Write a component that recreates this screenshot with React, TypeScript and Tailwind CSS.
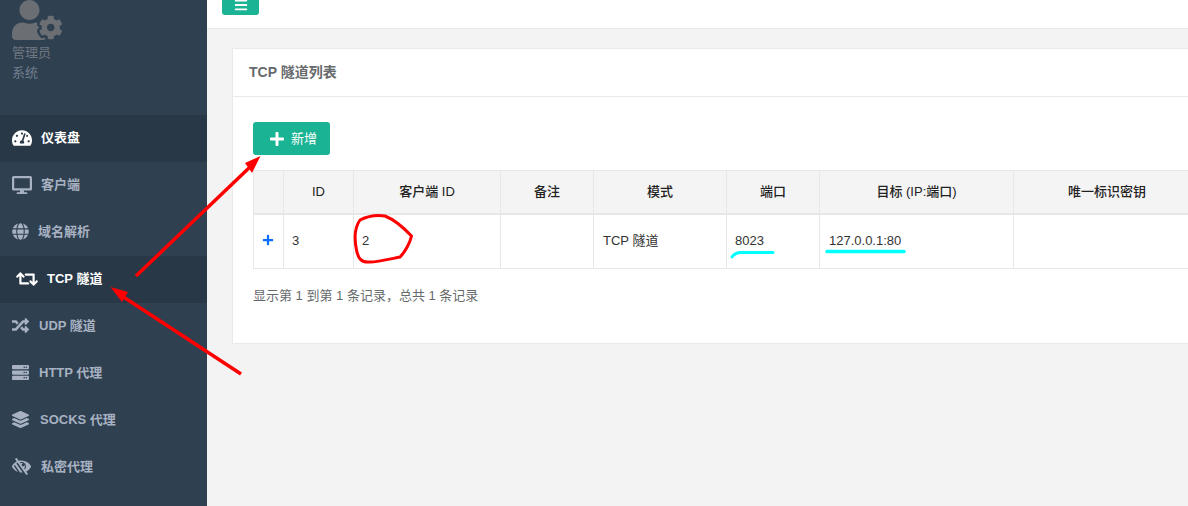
import React from 'react';
import { FaUserCog, FaTachometerAlt, FaDesktop, FaGlobe, FaRetweet, FaRandom, FaServer, FaLayerGroup, FaLowVision, FaPlus, FaBars } from 'react-icons/fa';

const menu = [
    { label: '仪表盘', icon: <FaTachometerAlt size={20} />, active: true, pad: 'pl-3', gap: 'gap-[9px]' },
    { label: '客户端', icon: <FaDesktop size={20} />, active: false, pad: 'pl-3', gap: 'gap-[9px]' },
    { label: '域名解析', icon: <FaGlobe size={17} />, active: false, pad: 'pl-3', gap: 'gap-[9px]' },
    { label: 'TCP 隧道', icon: <FaRetweet size={22} />, active: true, pad: 'pl-4', gap: 'gap-[9px]' },
    { label: 'UDP 隧道', icon: <FaRandom size={17} />, active: false, pad: 'pl-3', gap: 'gap-[10px]' },
    { label: 'HTTP 代理', icon: <FaServer size={17} />, active: false, pad: 'pl-3', gap: 'gap-[10px]' },
    { label: 'SOCKS 代理', icon: <FaLayerGroup size={17} />, active: false, pad: 'pl-3', gap: 'gap-[11px]' },
    { label: '私密代理', icon: <FaLowVision size={19} />, active: false, pad: 'pl-3', gap: 'gap-[10px]' },
];

const headers = ['', 'ID', '客户端 ID', '备注', '模式', '端口', '目标 (IP:端口)', '唯一标识密钥'];

const App = () => {
    return (
        <div className="relative flex h-[506px] w-[1188px] overflow-hidden bg-[#f3f3f4] font-['Liberation_Sans','Noto_Sans_CJK_SC',sans-serif] text-[13px] text-[#676a6c]">
            <aside className="w-[207px] shrink-0 bg-[#2f4050]">
                <div className="h-[115px] overflow-hidden pl-3">
                    <div className="-mt-[5px] text-[#6b6f73]">
                        <FaUserCog size={50} />
                    </div>
                    <div className="-mt-[2px] leading-[20px] text-[#6f7780]">管理员</div>
                    <div className="leading-[20px] text-[#6f7f8f]">系统</div>
                </div>
                <nav>
                    {menu.map((item) => (
                        <div
                            key={item.label}
                            className={`flex h-[47px] items-center pb-[2px] font-bold ${item.pad} ${item.gap} ${item.active ? 'bg-[#293846] text-white' : 'text-[#a7b1c2]'}`}
                        >
                            {item.icon}
                            <span>{item.label}</span>
                        </div>
                    ))}
                </nav>
            </aside>

            <main className="w-[981px] shrink-0">
                <div className="h-[29px] border-b border-[#e7eaec] bg-white pl-[15px]">
                    <div className="flex h-[15px] w-[37px] items-end justify-center rounded-b-[3px] bg-[#1ab394] pb-[3px] text-white">
                        <FaBars size={14} />
                    </div>
                </div>

                <section className="ml-[25px] mt-[19px] w-[1000px] border border-[#e7eaec] bg-white">
                    <h5 className="flex h-[48px] items-center border-b border-[#e7eaec] pl-4 text-[14px] font-bold text-[#676a6c]">TCP 隧道列表</h5>
                    <div className="px-5 pt-[25px] pb-[38px]">
                        <button className="flex h-[33px] w-[77px] items-center justify-center gap-[6px] rounded-[3px] bg-[#1ab394] pl-[3px] text-white">
                            <FaPlus size={16} />
                            <span>新增</span>
                        </button>
                        <table className="mt-[15px] w-[948px] table-fixed border-collapse text-[#333]">
                            <colgroup>
                                <col className="w-[30px]" />
                                <col className="w-[70px]" />
                                <col className="w-[147px]" />
                                <col className="w-[93px]" />
                                <col className="w-[133px]" />
                                <col className="w-[93px]" />
                                <col className="w-[194px]" />
                                <col />
                            </colgroup>
                            <thead>
                                <tr className="h-[43px] bg-[#f4f4f4]">
                                    {headers.map((h, i) => (
                                        <th key={i} className="border border-b-2 border-[#e7e7e7] text-center font-medium text-[#222]">{h}</th>
                                    ))}
                                </tr>
                            </thead>
                            <tbody>
                                <tr className="h-[55px]">
                                    <td className="border border-[#e7e7e7] pb-[2px] pr-[2px]">
                                        <div className="flex justify-center text-[#0d6efd]"><FaPlus size={12} /></div>
                                    </td>
                                    <td className="border border-[#e7e7e7] px-2 pb-[2px]">3</td>
                                    <td className="border border-[#e7e7e7] px-2 pb-[2px]">2</td>
                                    <td className="border border-[#e7e7e7] px-2"></td>
                                    <td className="border border-[#e7e7e7] px-[9px] pb-[2px]">TCP 隧道</td>
                                    <td className="border border-[#e7e7e7] px-2 pb-[2px]">8023</td>
                                    <td className="border border-[#e7e7e7] px-[9px] pb-[2px]">127.0.0.1:80</td>
                                    <td className="border border-[#e7e7e7] px-2"></td>
                                </tr>
                            </tbody>
                        </table>
                        <p className="mt-[18px] leading-[18px] text-[#676a6c]">显示第 1 到第 1 条记录，总共 1 条记录</p>
                    </div>
                </section>
            </main>

            {/* hand-drawn annotations on top of the screenshot */}
            <svg className="absolute left-0 top-0" width="1188" height="506" fill="none">
                <path d="M136 276 L250 167" stroke="#ff0000" strokeWidth="3.5" />
                <path d="M260.5 156 L245 163 L252 173 Z" fill="#ff0000" />
                <path d="M241 374 L122 296" stroke="#ff0000" strokeWidth="3.5" />
                <path d="M110.5 287 L128 292 L122 302 Z" fill="#ff0000" />
                <path d="M360 220 C368 216 378 215 385 216 C395 220 404 228 411.5 236 C410 243 405 252 400 257 C390 259 378 262 370 262 C361 263 358 258 356.5 250 C354 238 355 227 360 220 Z" stroke="#ff0000" strokeWidth="3" />
                <path d="M732 257 C734 254 736 252.5 741 252.5 L773 252.5" stroke="#00ffff" strokeWidth="3" strokeLinecap="round" />
                <path d="M827 251.5 L904 251.5" stroke="#00ffff" strokeWidth="3.5" strokeLinecap="round" />
            </svg>
        </div>
    );
};

export default App;
